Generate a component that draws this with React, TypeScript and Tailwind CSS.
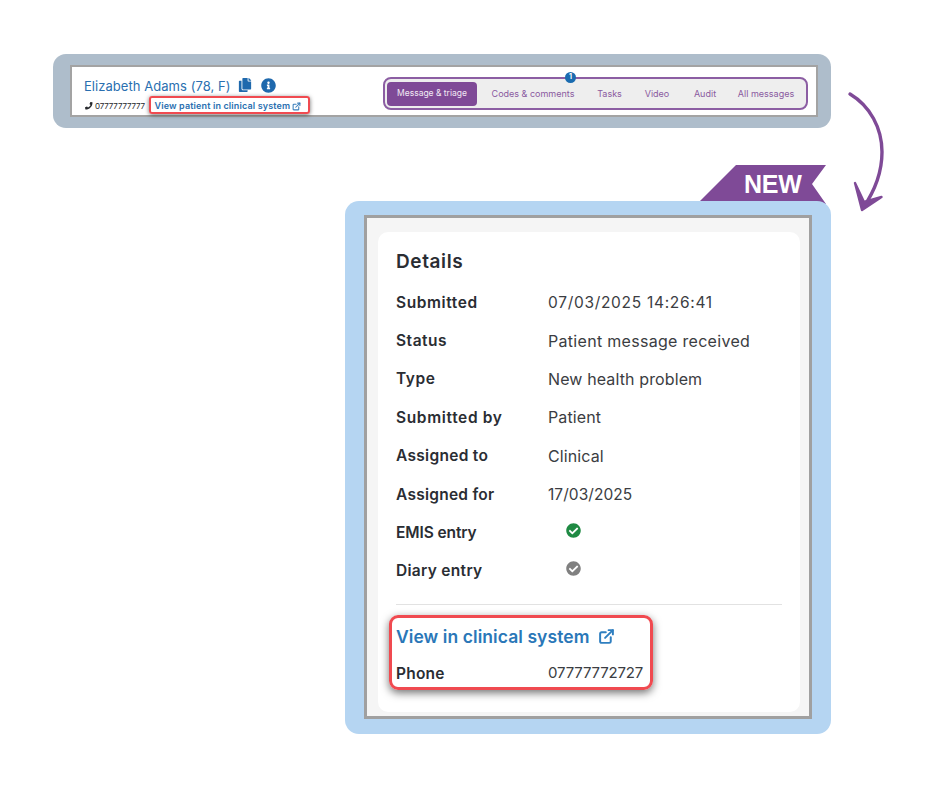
import { FaCopy, FaInfoCircle, FaPhone, FaCheckCircle } from "react-icons/fa";
import { ExternalLink } from "lucide-react";

const rows: [string, string, string, string][] = [
  ["Submitted", "07/03/2025 14:26:41", "text-[15.5px] tracking-[0.7px]", "tracking-[0.6px]"],
  ["Status", "Patient message received", "text-[16px] tracking-[0.3px] pt-px", "tracking-[0.5px]"],
  ["Type", "New health problem", "text-[16px] tracking-[0.12px]", "tracking-[0.6px]"],
  ["Submitted by", "Patient", "text-[16px] tracking-[0.1px]", "tracking-[0.65px]"],
  ["Assigned to", "Clinical", "text-[16px] tracking-[0.1px]", "tracking-[0.3px]"],
  ["Assigned for", "17/03/2025", "text-[15.5px] tracking-[0.05px]", "tracking-[0.25px]"],
];

const tabs: [string, string][] = [
  ["Codes & comments", "w-[112px]"],
  ["Tasks", "w-[41px]"],
  ["Video", "w-[54px]"],
  ["Audit", "w-[42px]"],
  ["All messages", "w-[80px]"],
];

function Row({ label, children, cls = "", labelCls = "" }: { label: string; children: React.ReactNode; cls?: string; labelCls?: string }) {
  return (
    <div className="flex h-[38.4px] items-center">
      <div className={`w-[152px] whitespace-nowrap text-[15.5px] font-semibold text-[#2a2d33] ${labelCls}`}>{label}</div>
      <div className={`whitespace-nowrap text-[#3b3d42] ${cls}`}>{children}</div>
    </div>
  );
}

export default function App() {
  return (
    <div className="relative h-[788px] w-[940px] overflow-hidden bg-white pl-[53px] pt-[54px] font-['Inter','Liberation_Sans',sans-serif]">
      {/* top panel */}
      <div className="h-[74px] w-[778px] rounded-[13px] bg-[#aebdcb] pl-[17px] pr-[13px] pt-[11px]">
        <div className="flex h-[52px] w-[748px] items-start border-2 border-[#a3a3a3] bg-white pl-[12px] pr-[8px]">
          <div className="w-[299px] pt-[8px]">
            <div className="flex h-[20px] items-center">
              <span className="w-[154px] whitespace-nowrap pt-[4px] text-[13px] tracking-[0.05px] text-[#2a6fb0]">Elizabeth Adams (78, F)</span>
              <FaCopy className="text-[14px] text-[#1f69ad]" />
              <FaInfoCircle className="ml-[9px] text-[15px] text-[#1f69ad]" />
            </div>
            <div className="relative mt-[5px] flex h-[12px] items-center text-[8px] text-[#26282c]">
              <FaPhone className="ml-px text-[7.5px]" />
              <span className="ml-[2.5px] w-[59.5px] whitespace-nowrap tracking-[-0.15px]">07777777777</span>
              <span className="whitespace-nowrap text-[9px] font-semibold tracking-[0.14px] text-[#2a6fb0]">View patient in clinical system</span>
              <ExternalLink size={9} strokeWidth={2.8} className="ml-[2px] text-[#3a7ebb]" />
              <div className="absolute left-[65px] top-[-4px] h-[18px] w-[161px] rounded-[3px] border-2 border-[#f04a50] shadow-[0_1px_4px_rgba(0,0,0,0.55)]" />
            </div>
          </div>
          <div className="relative mt-[10px] flex h-[33px] w-[425px] items-center rounded-[8px] border-2 border-[#8c5ea3] bg-[#eeeeee] pl-[2px]">
            <div className="flex h-[24px] w-[90px] items-center justify-center rounded-[4px] bg-[#7f4a97] text-[8.5px] text-[#f1e9f4]">Message &amp; triage</div>
            {tabs.map(([t, w]) => (
              <div key={t} className={`${w} whitespace-nowrap text-center text-[9px] text-[#8a5aa0]`}>{t}</div>
            ))}
            <div className="absolute left-[180px] top-[-7px] flex size-[11px] items-center justify-center rounded-full bg-[#1a6bb0] text-[7px] font-bold text-white">1</div>
          </div>
        </div>
      </div>

      {/* arrow */}
      <svg className="absolute left-[845px] top-[88px]" width="45" height="130" viewBox="845 88 45 130" fill="none">
        <path d="M850 94 C870 106 882 128 882 152 C882 172 874 192 863 208" stroke="#7f4a97" strokeWidth="3.4" strokeLinecap="round" />
        <path d="M855 183 L862 210 L881.5 197 L864 202 Z" fill="#7f4a97" stroke="#7f4a97" strokeWidth="2.4" strokeLinejoin="round" />
      </svg>

      {/* ribbon */}
      <svg className="absolute left-[700px] top-[165px]" width="127" height="40" viewBox="0 0 127 40">
        <polygon points="36,0 126,0 112,19 126,39 0,39 0,36" fill="#7f4a97" />
      </svg>
      <div className="absolute left-[744px] top-[170px] font-['Liberation_Sans',sans-serif] text-[25px] font-bold leading-[28px] tracking-[-0.3px] text-white">NEW</div>

      {/* bottom panel */}
      <div className="relative ml-[292px] mt-[73px] h-[533px] w-[486px] rounded-[14px] bg-[#b5d5f2] pl-[19px] pt-[14px]">
        <div className="h-[504px] w-[448px] border-[3px] border-[#a0a0a0] bg-[#f5f5f5] pl-[11px] pt-[14px]">
          <div className="h-[480px] w-[422px] rounded-[10px] bg-white pl-[18px] pr-[18px] pt-[16px]">
            <div className="h-[27px] text-[19px] font-semibold leading-[27px] tracking-[0.6px] text-[#2a2d33]">Details</div>
            <div className="mt-[8px]">
              {rows.map(([l, v, c, lc]) => (
                <Row key={l} label={l} cls={c} labelCls={lc}>{v}</Row>
              ))}
              <Row label="EMIS entry" labelCls="tracking-[-0.1px]"><FaCheckCircle className="ml-[18px] -translate-y-[2px] text-[15px] text-[#1f8a43]" /></Row>
              <Row label="Diary entry" labelCls="tracking-[0.3px]"><FaCheckCircle className="ml-[18px] -translate-y-[2px] text-[15px] text-[#808080]" /></Row>
            </div>
            <div className="mt-[14px] h-px bg-[#e2e2e2]" />
            <div className="relative">
              <div className="flex h-[43px] items-center pb-[2px] pt-[22px] text-[17.5px] font-semibold tracking-[0.07px] text-[#2a77b8]">
                View in clinical system
                <ExternalLink size={17} strokeWidth={2.8} className="ml-[9px] text-[#2f7fc0]" />
              </div>
              <div className="mt-[13px] flex h-[24px] items-center">
                <div className="w-[152px] text-[15.5px] font-semibold tracking-[0.2px] text-[#2a2d33]">Phone</div>
                <div className="text-[15px] tracking-[-0.15px] text-[#3b3d42]">07777772727</div>
              </div>
              <div className="absolute left-[-7px] top-[10px] h-[75px] w-[264px] rounded-[9px] border-[3px] border-[#f04a50] shadow-[0_3px_8px_rgba(0,0,0,0.55)]" />
            </div>
          </div>
        </div>
      </div>
    </div>
  );
}
